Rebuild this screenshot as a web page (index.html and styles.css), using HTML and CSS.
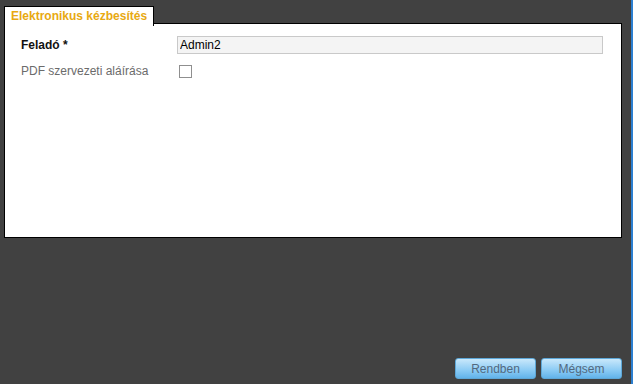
FILE: index.html
```html
<!DOCTYPE html>
<html lang="hu">
<head>
  <meta charset="UTF-8" />
  <title>Elektronikus kézbesítés</title>
  <link rel="stylesheet" href="styles.css">
</head>
<body>
  <div class="dialog">
    <div class="tabs">
      <div class="tab">Elektronikus kézbesítés</div>
    </div>
    <div class="panel">
      <div class="row">
        <label class="req" for="felado">Feladó *</label>
        <input type="text" id="felado" value="Admin2" readonly />
      </div>
      <div class="row">
        <label class="opt" for="pdf">PDF szervezeti aláírása</label>
        <span class="check" id="pdf"></span>
      </div>
    </div>
    <div class="buttons">
      <button>Rendben</button>
      <button>Mégsem</button>
    </div>
  </div>
</body>
</html>
```

FILE: styles.css
```css
html, body {
  margin: 0;
  height: 100%;
}
body {
  font-family: "Liberation Sans", Arial, sans-serif;
  font-size: 12px;
  background-color: #414141;
  border-right: 2px solid #2c7fd0;
  box-sizing: border-box;
}
.dialog {
  display: flex;
  flex-direction: column;
  height: 100%;
  padding: 6px 9px 0 4px;
  box-sizing: border-box;
}
.tabs {
  display: flex;
  height: 17px;
}
.tab {
  background-color: #fff;
  border: 1px solid #000;
  border-bottom: none;
  color: #e8a912;
  font-weight: bold;
  padding: 2px 0 0 6px;
  width: 142px;
  height: 17px;
  position: relative;
  z-index: 1;
}
.panel {
  background-color: #fff;
  border: 1px solid #000;
  height: 215px;
  padding: 12px 0 0 16px;
  box-sizing: border-box;
}
.row {
  display: flex;
  align-items: center;
  margin-bottom: 9px;
}
label {
  width: 156px;
}
.req {
  font-weight: bold;
  color: #111;
}
.opt {
  color: #6b6b6b;
}
input {
  width: 426px;
  height: 18px;
  box-sizing: border-box;
  border: 1px solid #c9c9c9;
  background-color: #f4f4f4;
  font-family: "Liberation Sans", Arial, sans-serif;
  font-size: 12px;
  padding: 0 2px;
  color: #000;
}
.check {
  display: block;
  width: 13px;
  height: 13px;
  box-sizing: border-box;
  border: 1px solid #8f8f8f;
  margin: 2px 0 0 2px;
  background-color: #fff;
}
.buttons {
  margin-top: auto;
  display: flex;
  justify-content: flex-end;
  gap: 5px;
  padding-bottom: 5px;
}
button {
  width: 81px;
  height: 21px;
  border: 1px solid #5ea8d8;
  border-radius: 3px;
  background: linear-gradient(#c9e8fb, #8fcdf5 55%, #62b3ea);
  color: #52697f;
  font-family: "Liberation Sans", Arial, sans-serif;
  font-size: 12px;
  padding: 0;
}
```
